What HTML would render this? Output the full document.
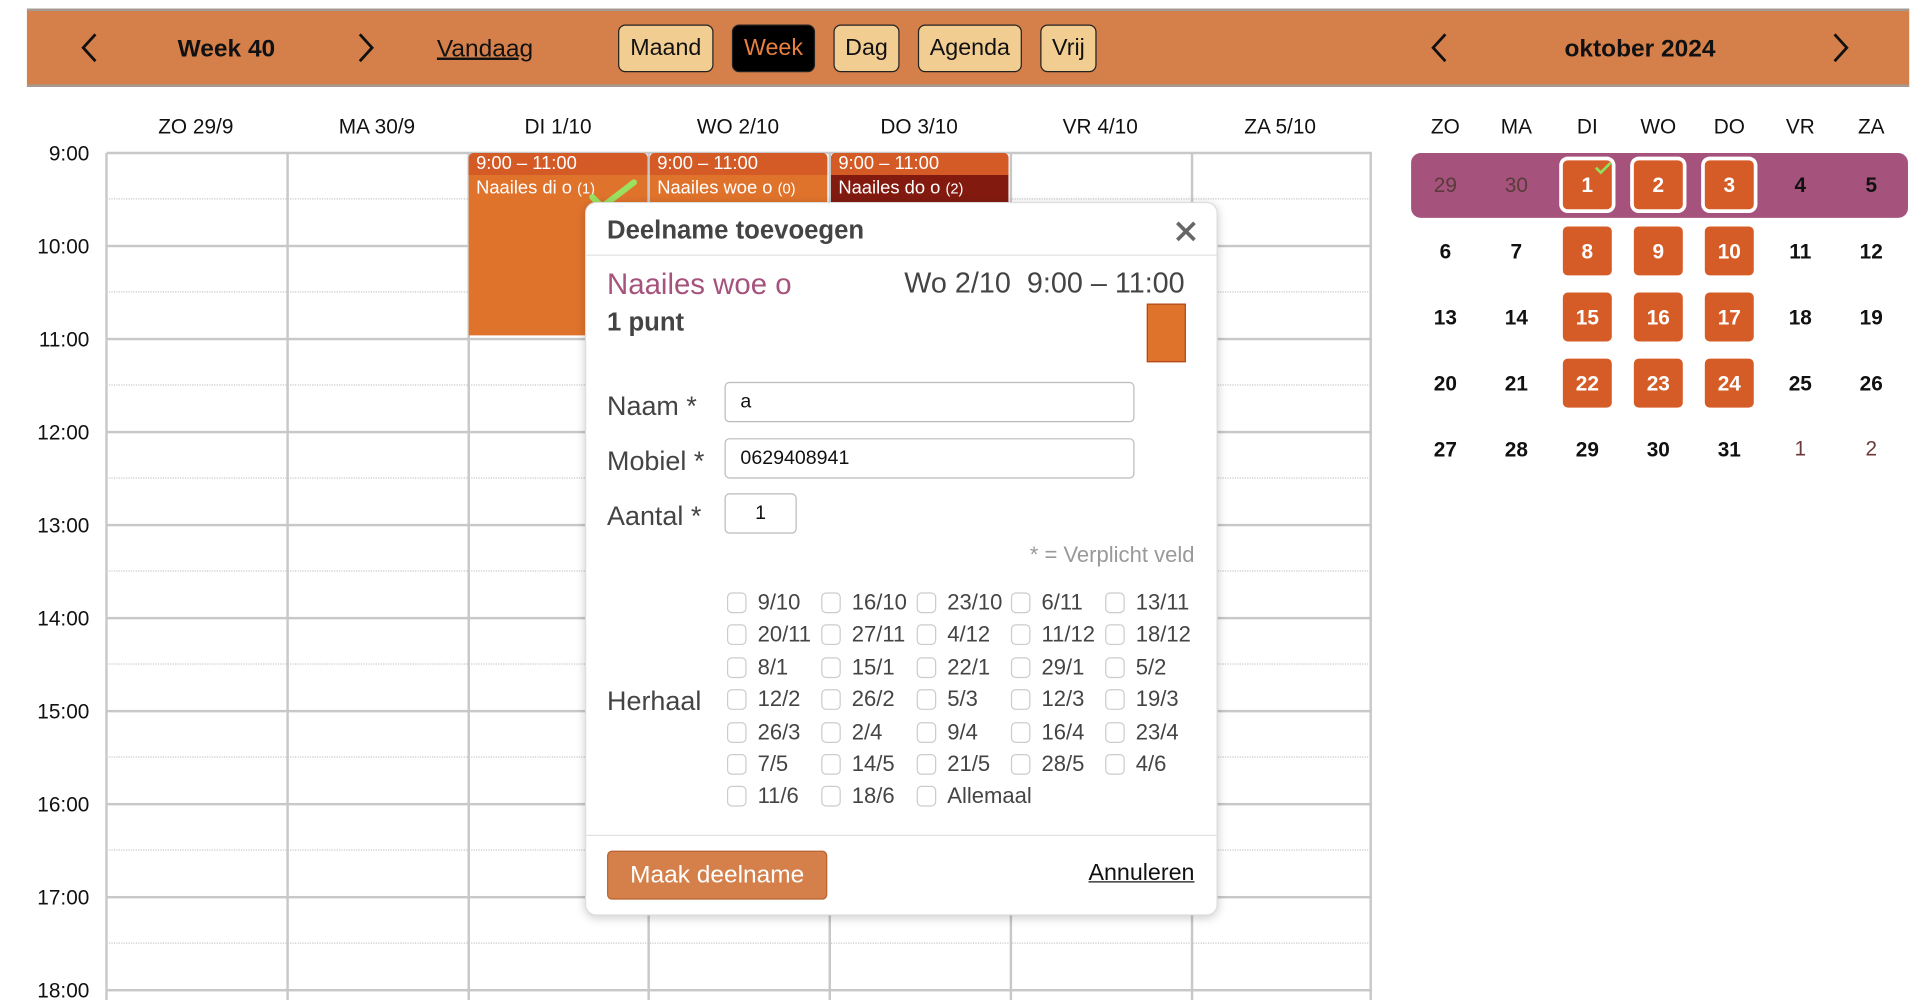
<!DOCTYPE html>
<html><head><meta charset="utf-8"><style>
*{box-sizing:border-box;margin:0;padding:0}
html,body{width:1919px;height:1000px;overflow:hidden;background:#fff}
#s{position:absolute;left:0;top:0;width:1568px;height:817px;transform:scale(1.22385,1.22399);transform-origin:0 0;font-family:"Liberation Sans",Arial,sans-serif;color:#111}
.a{position:absolute}
.bar{left:22px;top:7px;width:1538px;height:64px;background:#d5804a;border-top:2px solid #a49a94;border-bottom:2px solid #a49a94}
.btn{top:20px;height:39px;border:1.5px solid #222;border-radius:6px;background:#f2cd92;font-size:19px;line-height:37px;text-align:center}
.hd{top:94px;font-size:17px;text-align:center;width:148px}
.tm{left:0;width:73px;text-align:right;font-size:17px}
.vl{top:125px;width:2px;height:692px;background:#c8c8c8}
.hl{left:87px;width:1034px;height:2px;background:#c8c8c8}
.dl{left:89px;width:1031px;border-top:1.5px dotted #c8c8c8;height:0}
.ev{color:#fff;font-size:15px}
.mh{top:94px;width:58px;text-align:center;font-size:17px}
.md{width:58px;text-align:center;font-size:17px;font-weight:bold;line-height:42px;height:40px}
.sq{position:absolute;width:40px;height:40px;left:9px;top:0;background:#d65c27;border-radius:4px;color:#fff}
.wb{box-shadow:0 0 0 3px #fff}
.dlg{left:478px;top:165px;width:517px;height:583px;background:#fff;border:1px solid #ddd;border-radius:9px;box-shadow:0 2px 8px rgba(0,0,0,.2);color:#444}
.lb{font-size:22px;color:#444}
.in{border:1.5px solid #bbb;border-radius:4px;height:33px;font-size:16px;line-height:32px;padding-left:12px;color:#111;background:#fff}
.cb{width:16px;height:17px;border:1px solid #ccc;border-radius:4px;background:#fff}
.cl{font-size:18px;color:#444}
</style></head><body><div id="s">
<div class="a bar"></div>
<svg class="a" style="left:64px;top:26px" width="18" height="26"><path d="M14 2 L4 13 L14 24" fill="none" stroke="#111" stroke-width="2.3"/></svg>
<div class="a" style="left:135px;top:29px;width:100px;text-align:center;font-size:20px;font-weight:bold">Week 40</div>
<svg class="a" style="left:290px;top:26px" width="18" height="26"><path d="M4 2 L14 13 L4 24" fill="none" stroke="#111" stroke-width="2.3"/></svg>
<div class="a" style="left:357px;top:29px;font-size:20px;text-decoration:underline">Vandaag</div>
<div class="a btn" style="left:505px;width:78px">Maand</div>
<div class="a btn" style="left:598px;width:68px;background:#000;color:#e8803e">Week</div>
<div class="a btn" style="left:681px;width:54px">Dag</div>
<div class="a btn" style="left:750px;width:85px">Agenda</div>
<div class="a btn" style="left:850px;width:46px">Vrij</div>
<svg class="a" style="left:1167px;top:26px" width="18" height="26"><path d="M14 2 L4 13 L14 24" fill="none" stroke="#111" stroke-width="2.3"/></svg>
<div class="a" style="left:1240px;top:29px;width:200px;text-align:center;font-size:20px;font-weight:bold">oktober 2024</div>
<svg class="a" style="left:1495px;top:26px" width="18" height="26"><path d="M4 2 L14 13 L4 24" fill="none" stroke="#111" stroke-width="2.3"/></svg>

<div class="a hd" style="left:86px">ZO 29/9</div>
<div class="a hd" style="left:234px">MA 30/9</div>
<div class="a hd" style="left:382px">DI 1/10</div>
<div class="a hd" style="left:529px">WO 2/10</div>
<div class="a hd" style="left:677px">DO 3/10</div>
<div class="a hd" style="left:825px">VR 4/10</div>
<div class="a hd" style="left:972px">ZA 5/10</div>

<div class="a tm" style="top:116px">9:00</div>
<div class="a tm" style="top:192px">10:00</div>
<div class="a tm" style="top:268px">11:00</div>
<div class="a tm" style="top:344px">12:00</div>
<div class="a tm" style="top:420px">13:00</div>
<div class="a tm" style="top:496px">14:00</div>
<div class="a tm" style="top:572px">15:00</div>
<div class="a tm" style="top:648px">16:00</div>
<div class="a tm" style="top:724px">17:00</div>
<div class="a tm" style="top:800px">18:00</div>

<div class="a hl" style="top:124px"></div><div class="a dl" style="top:162px"></div>
<div class="a hl" style="top:200px"></div><div class="a dl" style="top:238px"></div>
<div class="a hl" style="top:276px"></div><div class="a dl" style="top:314px"></div>
<div class="a hl" style="top:352px"></div><div class="a dl" style="top:390px"></div>
<div class="a hl" style="top:428px"></div><div class="a dl" style="top:466px"></div>
<div class="a hl" style="top:504px"></div><div class="a dl" style="top:542px"></div>
<div class="a hl" style="top:580px"></div><div class="a dl" style="top:618px"></div>
<div class="a hl" style="top:656px"></div><div class="a dl" style="top:694px"></div>
<div class="a hl" style="top:732px"></div><div class="a dl" style="top:770px"></div>
<div class="a hl" style="top:808px"></div>
<div class="a vl" style="left:86px"></div>
<div class="a vl" style="left:234px"></div>
<div class="a vl" style="left:382px"></div>
<div class="a vl" style="left:529px"></div>
<div class="a vl" style="left:677px"></div>
<div class="a vl" style="left:825px"></div>
<div class="a vl" style="left:973px"></div>
<div class="a vl" style="left:1119px"></div>

<div class="a ev" style="left:383px;top:125px;width:146px;height:149px;background:#e0732c;border-radius:4px 4px 0 0">
<div style="background:#d45a26;height:18px;line-height:17px;padding-left:6px;border-radius:4px 4px 0 0">9:00 – 11:00</div>
<div style="padding-left:6px;line-height:22px">Naailes di o <span style="font-size:12px">(1)</span></div></div>
<svg class="a" style="left:478px;top:145px" width="44" height="26"><path d="M6 16 L14 24 M14 24 L40 4" stroke="#9be060" stroke-width="5" stroke-linecap="round" fill="none"/></svg>
<div class="a ev" style="left:531px;top:125px;width:145px;height:40px;background:#e0732c;border-radius:4px 4px 0 0">
<div style="background:#d45a26;height:18px;line-height:17px;padding-left:6px;border-radius:4px 4px 0 0">9:00 – 11:00</div>
<div style="padding-left:6px;line-height:22px">Naailes woe o <span style="font-size:12px">(0)</span></div></div>
<div class="a ev" style="left:679px;top:125px;width:145px;height:40px;background:#821a10;border-radius:4px 4px 0 0">
<div style="background:#d45a26;height:18px;line-height:17px;padding-left:6px;border-radius:4px 4px 0 0">9:00 – 11:00</div>
<div style="padding-left:6px;line-height:22px">Naailes do o <span style="font-size:12px">(2)</span></div></div>

<div class="a mh" style="left:1152px">ZO</div><div class="a mh" style="left:1210px">MA</div><div class="a mh" style="left:1268px">DI</div><div class="a mh" style="left:1326px">WO</div><div class="a mh" style="left:1384px">DO</div><div class="a mh" style="left:1442px">VR</div><div class="a mh" style="left:1500px">ZA</div>
<div class="a" style="left:1153px;top:125px;width:406px;height:53px;background:#a5537c;border-radius:8px"></div>
<div class="a md" style="left:1152px;top:131px;color:#5a3a3a;font-weight:normal">29</div>
<div class="a md" style="left:1210px;top:131px;color:#5a3a3a;font-weight:normal">30</div>
<div class="a md" style="left:1268px;top:131px"><div class="sq wb">1</div></div>
<svg class="a" style="left:1302px;top:131px" width="16" height="12"><path d="M2 6 L6 10 L14 2" stroke="#8fe05a" stroke-width="2.2" fill="none"/></svg>
<div class="a md" style="left:1326px;top:131px"><div class="sq wb">2</div></div>
<div class="a md" style="left:1384px;top:131px"><div class="sq wb">3</div></div>
<div class="a md" style="left:1442px;top:131px">4</div>
<div class="a md" style="left:1500px;top:131px">5</div>

<div class="a md" style="left:1152px;top:185px">6</div><div class="a md" style="left:1210px;top:185px">7</div>
<div class="a md" style="left:1268px;top:185px"><div class="sq">8</div></div><div class="a md" style="left:1326px;top:185px"><div class="sq">9</div></div><div class="a md" style="left:1384px;top:185px"><div class="sq">10</div></div>
<div class="a md" style="left:1442px;top:185px">11</div><div class="a md" style="left:1500px;top:185px">12</div>

<div class="a md" style="left:1152px;top:239px">13</div><div class="a md" style="left:1210px;top:239px">14</div>
<div class="a md" style="left:1268px;top:239px"><div class="sq">15</div></div><div class="a md" style="left:1326px;top:239px"><div class="sq">16</div></div><div class="a md" style="left:1384px;top:239px"><div class="sq">17</div></div>
<div class="a md" style="left:1442px;top:239px">18</div><div class="a md" style="left:1500px;top:239px">19</div>

<div class="a md" style="left:1152px;top:293px">20</div><div class="a md" style="left:1210px;top:293px">21</div>
<div class="a md" style="left:1268px;top:293px"><div class="sq">22</div></div><div class="a md" style="left:1326px;top:293px"><div class="sq">23</div></div><div class="a md" style="left:1384px;top:293px"><div class="sq">24</div></div>
<div class="a md" style="left:1442px;top:293px">25</div><div class="a md" style="left:1500px;top:293px">26</div>

<div class="a md" style="left:1152px;top:347px">27</div><div class="a md" style="left:1210px;top:347px">28</div><div class="a md" style="left:1268px;top:347px">29</div><div class="a md" style="left:1326px;top:347px">30</div><div class="a md" style="left:1384px;top:347px">31</div>
<div class="a md" style="left:1442px;top:346px;font-weight:normal;color:#6b3a3a">1</div><div class="a md" style="left:1500px;top:346px;font-weight:normal;color:#6b3a3a">2</div>

<div class="a dlg">
<div class="a" style="left:17px;top:11px;font-size:21px;font-weight:bold;color:#444">Deelname toevoegen</div>
<svg class="a" style="left:481px;top:14px" width="18" height="18"><path d="M2 2 L16 16 M16 2 L2 16" stroke="#666" stroke-width="3"/></svg>
<div class="a" style="left:0;top:42px;width:515px;height:1px;background:#e2e2e2"></div>
<div class="a" style="left:17px;top:53px;font-size:24px;color:#a5537c">Naailes woe o</div>
<div class="a" style="right:26px;top:52px;font-size:23.5px;color:#444;white-space:pre">Wo 2/10  9:00 – 11:00</div>
<div class="a" style="left:17px;top:86px;font-size:21px;font-weight:bold;color:#444">1 punt</div>
<div class="a" style="left:458px;top:82px;width:32px;height:48px;background:#e0732c;border:1.5px solid #b04a1a"></div>
<div class="a lb" style="left:17px;top:153px">Naam *</div>
<div class="a in" style="left:113px;top:146px;width:335px">a</div>
<div class="a lb" style="left:17px;top:198px">Mobiel *</div>
<div class="a in" style="left:113px;top:192px;width:335px">0629408941</div>
<div class="a lb" style="left:17px;top:243px">Aantal *</div>
<div class="a in" style="left:113px;top:237px;width:59px;padding-left:24px">1</div>
<div class="a" style="right:18px;top:277px;font-size:18px;color:#999">* = Verplicht veld</div>
<div class="a lb" style="left:17px;top:394px">Herhaal</div>

<div class="a" style="left:115px;top:316px;width:400px">
<style>.g{position:absolute;display:flex;align-items:center;height:20px}.g .cb{margin-right:9px}</style>
<div class="g" style="left:0;top:0"><div class="cb"></div><span class="cl">9/10</span></div>
<div class="g" style="left:77px;top:0"><div class="cb"></div><span class="cl">16/10</span></div>
<div class="g" style="left:155px;top:0"><div class="cb"></div><span class="cl">23/10</span></div>
<div class="g" style="left:232px;top:0"><div class="cb"></div><span class="cl">6/11</span></div>
<div class="g" style="left:309px;top:0"><div class="cb"></div><span class="cl">13/11</span></div>
<div class="g" style="left:0;top:26px"><div class="cb"></div><span class="cl">20/11</span></div>
<div class="g" style="left:77px;top:26px"><div class="cb"></div><span class="cl">27/11</span></div>
<div class="g" style="left:155px;top:26px"><div class="cb"></div><span class="cl">4/12</span></div>
<div class="g" style="left:232px;top:26px"><div class="cb"></div><span class="cl">11/12</span></div>
<div class="g" style="left:309px;top:26px"><div class="cb"></div><span class="cl">18/12</span></div>
<div class="g" style="left:0;top:53px"><div class="cb"></div><span class="cl">8/1</span></div>
<div class="g" style="left:77px;top:53px"><div class="cb"></div><span class="cl">15/1</span></div>
<div class="g" style="left:155px;top:53px"><div class="cb"></div><span class="cl">22/1</span></div>
<div class="g" style="left:232px;top:53px"><div class="cb"></div><span class="cl">29/1</span></div>
<div class="g" style="left:309px;top:53px"><div class="cb"></div><span class="cl">5/2</span></div>
<div class="g" style="left:0;top:79px"><div class="cb"></div><span class="cl">12/2</span></div>
<div class="g" style="left:77px;top:79px"><div class="cb"></div><span class="cl">26/2</span></div>
<div class="g" style="left:155px;top:79px"><div class="cb"></div><span class="cl">5/3</span></div>
<div class="g" style="left:232px;top:79px"><div class="cb"></div><span class="cl">12/3</span></div>
<div class="g" style="left:309px;top:79px"><div class="cb"></div><span class="cl">19/3</span></div>
<div class="g" style="left:0;top:106px"><div class="cb"></div><span class="cl">26/3</span></div>
<div class="g" style="left:77px;top:106px"><div class="cb"></div><span class="cl">2/4</span></div>
<div class="g" style="left:155px;top:106px"><div class="cb"></div><span class="cl">9/4</span></div>
<div class="g" style="left:232px;top:106px"><div class="cb"></div><span class="cl">16/4</span></div>
<div class="g" style="left:309px;top:106px"><div class="cb"></div><span class="cl">23/4</span></div>
<div class="g" style="left:0;top:132px"><div class="cb"></div><span class="cl">7/5</span></div>
<div class="g" style="left:77px;top:132px"><div class="cb"></div><span class="cl">14/5</span></div>
<div class="g" style="left:155px;top:132px"><div class="cb"></div><span class="cl">21/5</span></div>
<div class="g" style="left:232px;top:132px"><div class="cb"></div><span class="cl">28/5</span></div>
<div class="g" style="left:309px;top:132px"><div class="cb"></div><span class="cl">4/6</span></div>
<div class="g" style="left:0;top:158px"><div class="cb"></div><span class="cl">11/6</span></div>
<div class="g" style="left:77px;top:158px"><div class="cb"></div><span class="cl">18/6</span></div>
<div class="g" style="left:155px;top:158px"><div class="cb"></div><span class="cl">Allemaal</span></div>
</div>

<div class="a" style="left:0;top:516px;width:515px;height:1px;background:#e2e2e2"></div>
<div class="a" style="left:17px;top:529px;width:180px;height:40px;background:#d5804a;border:1.5px solid #b9632e;border-radius:4px;color:#fff;font-size:20px;text-align:center;line-height:38px">Maak deelname</div>
<div class="a" style="right:18px;top:537px;font-size:19px;color:#111;text-decoration:underline">Annuleren</div>
</div>
</div></body></html>
